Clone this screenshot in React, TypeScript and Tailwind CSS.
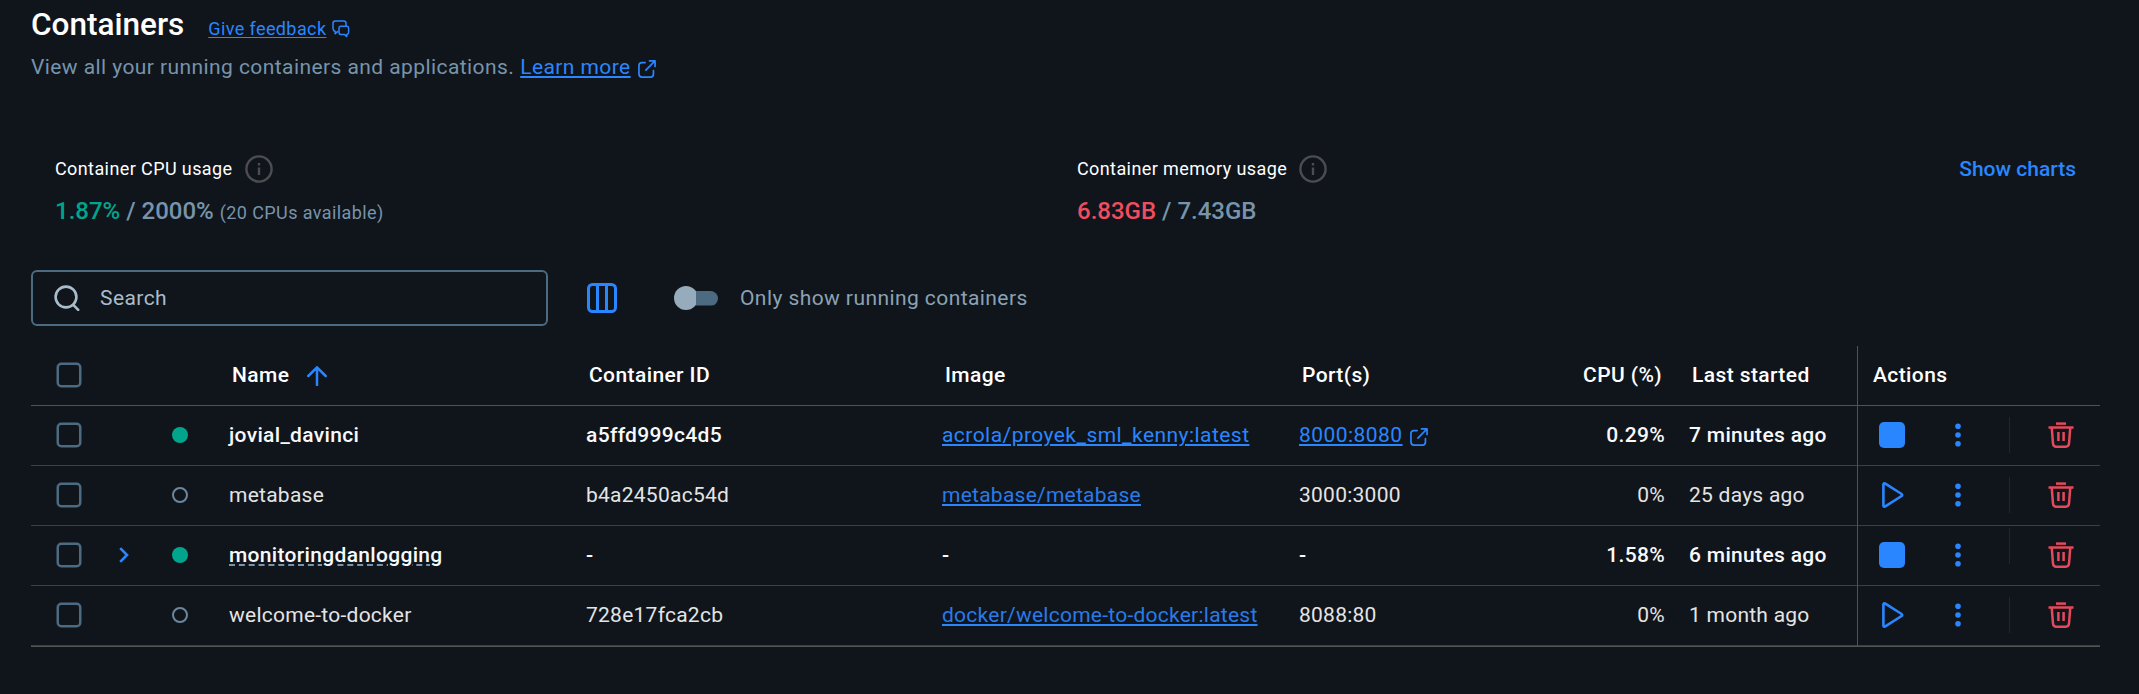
import React from "react";

const FeedbackIcon = () => (
  <svg className="block" width="18" height="18" viewBox="0 0 18 18" fill="none" stroke="#2a86ff" strokeWidth="1.5" strokeLinejoin="round" strokeLinecap="round">
    <path d="M3.2 13.600V11.500C1.800 10.900 1 9.900 1 8.500V3.300C1 2 1.900 1 3.300 1h8.400C13.100 1 14 2 14 3.300V6" />
    <path d="M3.200 13.600L5.500 11.600" />
    <path d="M8.900 6.300h5.800c1.100 0 1.900.8 1.900 1.900v4.300c0 1.100-.7 1.800-1.800 1.900v2.200l-2.400-2.200H8.900c-1.100 0-1.900-.8-1.900-1.900V8.200c0-1.100.8-1.900 1.900-1.900z" />
  </svg>
);

const ExternalIcon = () => (
  <svg className="block" width="18" height="18" viewBox="0 0 19 19" fill="none" stroke="#2a86ff" strokeWidth="1.800" strokeLinejoin="round" strokeLinecap="round">
    <path d="M7.500 2.700H4.200C2.300 2.700 1 4 1 5.900v8.600C1 16.600 2.300 18 4.200 18h8.900c1.900 0 3.200-1.400 3.200-3.300v-3.500" />
    <path d="M8.300 10.600L17.700 1.200M12.200 1h5.800v5.800" />
  </svg>
);

const InfoIcon = () => (
  <svg className="block" width="28" height="28" viewBox="0 0 28 28" fill="none" stroke="#4c4d50" strokeWidth="2.400">
    <circle cx="14" cy="14" r="12.600" />
    <path d="M14 12.600v7.400M14 8v2.400" />
  </svg>
);

const SearchIcon = () => (
  <svg className="block" width="26" height="26" viewBox="0 0 26 26" fill="none" stroke="#a9bccb" strokeWidth="2.600" strokeLinecap="round">
    <circle cx="12" cy="12" r="10.400" />
    <path d="M19.300 19.800l4.900 5" />
  </svg>
);

const ColumnsIcon = () => (
  <svg className="block" width="30" height="30" viewBox="0 0 30 30" fill="none" stroke="#2a86ff" strokeWidth="3">
    <rect x="1.500" y="1.500" width="27" height="27" rx="4" />
    <path d="M10.500 1.500v27M19.500 1.500v27" />
  </svg>
);

const SortIcon = () => (
  <svg className="block" width="20" height="20" viewBox="0 0 20 20" fill="none" stroke="#2a86ff" strokeWidth="2.500" strokeLinecap="round" strokeLinejoin="round">
    <path d="M10 19V1.300M1.300 10L10 1.300 18.700 10" />
  </svg>
);

const ChevronIcon = () => (
  <svg className="block" width="10" height="16" viewBox="0 0 10 16" fill="none" stroke="#2a86ff" strokeWidth="2.600">
    <path d="M1.200 1.200L8 8l-6.800 6.800" />
  </svg>
);

const PlayIcon = () => (
  <svg className="block" width="22" height="26" viewBox="0 0 22 26" fill="none" stroke="#2a86ff" strokeWidth="2.600" strokeLinejoin="round">
    <path d="M1.400 2.600v20.800c0 1.100.9 1.600 1.900 1L19.600 14c.8-.5.8-1.500 0-2L3.300 1.600c-1-.6-1.900-.1-1.900 1z" />
  </svg>
);

const DotsIcon = () => (
  <svg className="block" width="6" height="24" viewBox="0 0 6 24" fill="#2a86ff">
    <circle cx="3" cy="3.200" r="2.800" />
    <circle cx="3" cy="12" r="2.800" />
    <circle cx="3" cy="20.800" r="2.800" />
  </svg>
);

const TrashIcon = () => (
  <svg className="block" width="26" height="26" viewBox="0 0 26 26" fill="none" stroke="#e5495b" strokeWidth="2.500">
    <path d="M8 1.600h10" />
    <path d="M.5 5.500h25" />
    <path d="M3.700 5.500l1.300 16.200c.2 2 1.300 3 3.200 3h9.600c1.900 0 3-1 3.200-3l1.300-16.200" />
    <path d="M10.400 10v9M15.600 10v9" />
  </svg>
);

const Checkbox = () => (
  <svg className="block" width="26" height="26" viewBox="0 0 26 26" fill="none" stroke="#4c6a82" strokeWidth="2.500">
    <rect x="1.750" y="1.750" width="22.500" height="22.500" rx="3.500" />
  </svg>
);

type Row = {
  name: string;
  group?: boolean;
  running: boolean;
  id: string;
  image: string;
  port: string;
  cpu: string;
  started: string;
  divider: string;
};

const rows: Row[] = [
  { name: "jovial_davinci", running: true, id: "a5ffd999c4d5", image: "acrola/proyek_sml_kenny:latest", port: "8000:8080", cpu: "0.29%", started: "7 minutes ago", divider: "mt-[11px]" },
  { name: "metabase", running: false, id: "b4a2450ac54d", image: "metabase/metabase", port: "3000:3000", cpu: "0%", started: "25 days ago", divider: "mt-[11px]" },
  { name: "monitoringdanlogging", group: true, running: true, id: "-", image: "-", port: "-", cpu: "1.58%", started: "6 minutes ago", divider: "mt-[2px]" },
  { name: "welcome-to-docker", running: false, id: "728e17fca2cb", image: "docker/welcome-to-docker:latest", port: "8088:80", cpu: "0%", started: "1 month ago", divider: "mt-[11px]" },
];

const grid = "grid grid-cols-[198px_357px_356px_357px_276px_114px_168px_243px]";
const link = "underline underline-offset-[2px] decoration-2 decoration-[#2a86ff]";

const ContainerRow = ({ row }: { row: Row }) => (
  <div className={`${grid} h-[60px] border-b border-[#30434f] text-[21px] ${row.running ? "font-medium tracking-[0.32px] text-[#f8f9fa]" : "font-normal tracking-[0.25px] text-[#e4e4e5]"}`}>
    <div className="flex items-center pb-[3px] pl-[25px]">
      <Checkbox />
      <div className="flex w-[60px] items-center pl-[37px]">{row.group && <ChevronIcon />}</div>
      <span className={`ml-[30px] size-4 rounded-full ${row.running ? "bg-[#00a58c]" : "border-2 border-[#6b879d]"}`} />
    </div>
    <div className="flex items-center">
      <span className={row.group ? "underline decoration-dashed decoration-[#7794ab] decoration-2 underline-offset-[2px]" : ""}>{row.name}</span>
    </div>
    <div className="flex items-center">{row.id}</div>
    <div className="flex items-center">
      <span className={row.group ? "" : `${link} ${row.running ? "font-normal tracking-[0.45px] text-[#2a86ff]" : "text-[#287be9]"}`}>{row.image}</span>
    </div>
    <div className="flex items-center">
      {row.running && !row.group ? (
        <>
          <span className={`${link} font-normal tracking-[0.45px] text-[#2a86ff]`}>{row.port}</span>
          <span className="ml-[7px] mt-[2px]"><ExternalIcon /></span>
        </>
      ) : (
        row.port
      )}
    </div>
    <div className="flex items-center justify-end pr-[24px]">{row.cpu}</div>
    <div className="flex items-center">{row.started}</div>
    <div className="flex h-[60px] border-l border-[#4f5354] pl-[21px]">
      <div className="flex w-[76px] items-center pb-[2px]">
        {row.running ? <span className="size-[26px] rounded-[5px] bg-[#2a86ff]" /> : <span className="pl-[3px]"><PlayIcon /></span>}
      </div>
      <div className="flex w-[54px] items-center pb-[2px]"><DotsIcon /></div>
      <span className={`h-9 w-px bg-[#20262d] ${row.divider}`} />
      <div className="ml-[38px] flex items-center pb-[2px]"><TrashIcon /></div>
    </div>
  </div>
);

export default function App() {
  return (
    <div className="h-[694px] w-[2139px] overflow-hidden bg-[#10151b] pl-[31px] pr-[39px] font-['Roboto',sans-serif] whitespace-nowrap">
      <header className="h-[130px] pt-px">
        <div className="flex h-[48px] items-baseline">
          <h1 className="text-[31.5px] font-medium leading-[48px] text-white">Containers</h1>
          <a className="ml-6 text-[18px] leading-[24px] tracking-[0.4px] text-[#2a86ff] underline decoration-1 underline-offset-2">Give feedback</a>
          <span className="ml-[6px] translate-y-[3px]"><FeedbackIcon /></span>
        </div>
        <div className="flex h-[38px] items-center text-[21px] tracking-[0.42px] text-[#7794ab]">
          <span>View all your running containers and applications.</span>
          <a className={`ml-[6px] text-[#2a86ff] ${link}`}>Learn more</a>
          <span className="ml-[7px] mt-[2px]"><ExternalIcon /></span>
        </div>
      </header>

      <section className="flex h-[140px] pl-[24px] pt-[24px]">
        <div className="w-[1022px]">
          <div className="flex h-[30px] items-center text-[18px] tracking-[0.4px] text-white">
            <span className="pb-px">Container CPU usage</span>
            <span className="ml-[12px]"><InfoIcon /></span>
          </div>
          <div className="mt-[10px] text-[24px] font-medium leading-[34px] text-[#7794ab]">
            <span className="text-[#00a58c]">1.87%</span> / 2000% <span className="text-[18px] font-normal tracking-[0.4px]">(20 CPUs available)</span>
          </div>
        </div>
        <div className="flex-1">
          <div className="flex h-[30px] items-center text-[18px] tracking-[0.4px] text-white">
            <span className="pb-px">Container memory usage</span>
            <span className="ml-[12px]"><InfoIcon /></span>
          </div>
          <div className="mt-[10px] text-[24px] font-medium leading-[34px] text-[#7794ab]">
            <span className="text-[#ef4d60]">6.83GB</span> / 7.43GB
          </div>
        </div>
        <button className="mr-[24px] h-[30px] text-[21px] font-medium text-[#2a86ff]">Show charts</button>
      </section>

      <section className="flex h-[56px] items-center">
        <div className="flex h-[56px] w-[517px] items-center rounded-[6px] border-2 border-[#4c6a82] pl-[21px] text-[21px] tracking-[0.42px] text-[#a9bccb]">
          <SearchIcon />
          <span className="ml-[20px] pt-[2px]">Search</span>
        </div>
        <span className="ml-[39px]"><ColumnsIcon /></span>
        <div className="ml-[57px] flex h-6 w-11 items-center">
          <span className="size-6 shrink-0 rounded-full bg-[#96abbc]" />
          <span className="-ml-3 h-[15px] w-8 rounded-r-full bg-[#4c6a82] [clip-path:inset(0_0_0_10px)]" />
        </div>
        <span className="ml-[22px] pt-[2px] text-[21px] tracking-[0.42px] text-[#8ba2b5]">Only show running containers</span>
      </section>

      <section className="mt-5 border-b border-[#4f5354]">
        <div className={`${grid} h-[60px] border-b border-[#4f5354] text-[21px] font-medium tracking-[0.4px] text-white`}>
          <div className="flex items-center pb-[3px] pl-[25px]"><Checkbox /></div>
          <div className="flex items-center pl-[3px]">Name<span className="ml-[18px]"><SortIcon /></span></div>
          <div className="flex items-center pl-[3px]">Container ID</div>
          <div className="flex items-center pl-[3px]">Image</div>
          <div className="flex items-center pl-[3px]">Port(s)</div>
          <div className="flex items-center justify-end pr-[27px]">CPU (%)</div>
          <div className="flex items-center pl-[3px]">Last started</div>
          <div className="flex h-[60px] items-center border-l border-[#4f5354] pb-px pl-[15px]">Actions</div>
        </div>
        {rows.map((row) => (
          <ContainerRow key={row.name} row={row} />
        ))}
      </section>
    </div>
  );
}
